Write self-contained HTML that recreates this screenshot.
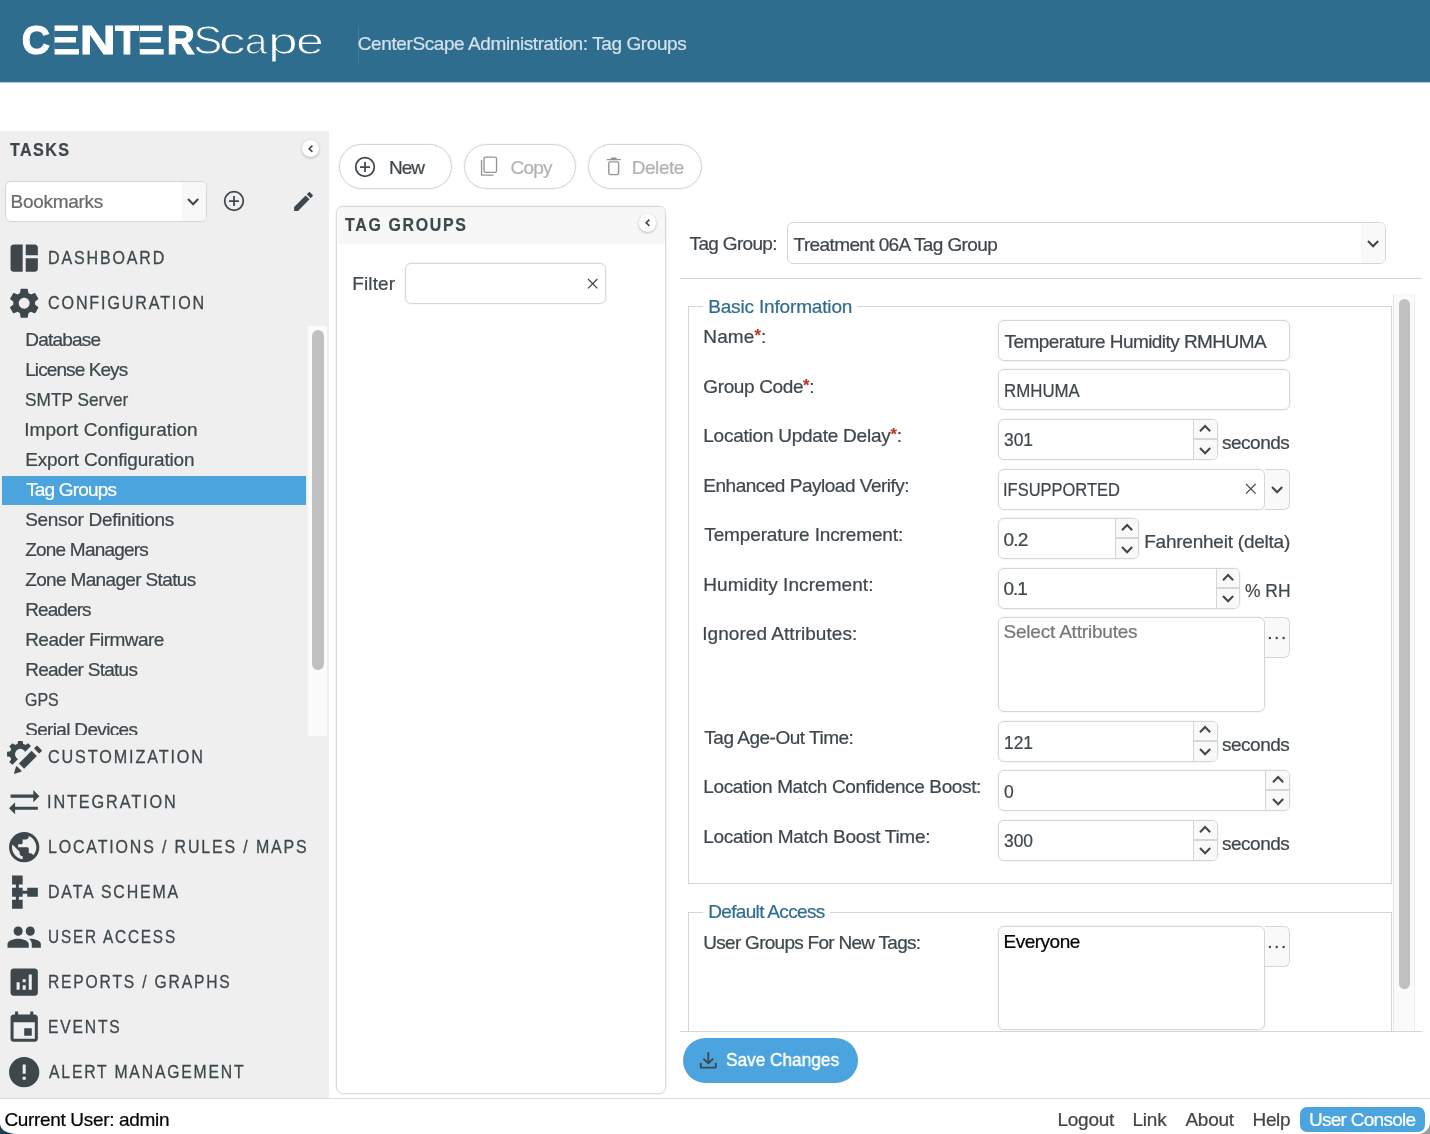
<!DOCTYPE html>
<html lang="en"><head><meta charset="utf-8"><title>CenterScape Administration: Tag Groups</title>
<style>
html,body{margin:0;padding:0;}
body{width:1430px;height:1134px;position:relative;overflow:hidden;background:#fff;font-family:"Liberation Sans", sans-serif;color:#3e474c;}
#app div,#app svg,#app span{position:absolute;box-sizing:border-box;}
#app span{white-space:nowrap;transform-origin:0 50%;-webkit-text-stroke-width:0.22px;}
</style></head>
<body><div id="app" style="left:0;top:0;width:1430px;height:1134px;overflow:hidden;will-change:transform">
<div style="left:0px;top:0px;width:1430px;height:82px;background:#2f6d8f;"></div>
<div style="left:0px;top:82px;width:1430px;height:1px;background:#b4cad6;"></div>
<div style="left:358px;top:27px;width:1px;height:36px;background:rgba(255,255,255,.10);"></div>
<svg style="left:0;top:0" width="340" height="82" viewBox="0 0 340 82" role="img" aria-label="CENTERScape"><title>CENTERScape</title>
<g font-family="Liberation Sans, sans-serif" fill="#fff">
<defs><clipPath id="ce1"><rect x="54.6" y="20" width="30" height="40"/></clipPath><clipPath id="ce2"><rect x="139.8" y="20" width="30" height="40"/></clipPath></defs>
<text transform="translate(21.69,54.3) scale(0.9838,1)" font-size="39.8" font-weight="700" stroke="#fff" stroke-width="1" vector-effect="non-scaling-stroke">C</text>
<g clip-path="url(#ce1)"><text transform="translate(41.26,54.3) scale(1.4823,1)" font-size="39.8" font-weight="700" stroke="#fff" stroke-width="1" vector-effect="non-scaling-stroke">E</text></g>
<text transform="translate(79.87,54.3) scale(1.2522,1)" font-size="39.8" font-weight="700" stroke="#fff" stroke-width="1" vector-effect="non-scaling-stroke">N</text>
<text transform="translate(115.06,54.3) scale(0.9814,1)" font-size="39.8" font-weight="700" stroke="#fff" stroke-width="1" vector-effect="non-scaling-stroke">T</text>
<g clip-path="url(#ce2)"><text transform="translate(126.71,54.3) scale(1.4521,1)" font-size="39.8" font-weight="700" stroke="#fff" stroke-width="1" vector-effect="non-scaling-stroke">E</text></g>
<text transform="translate(166.80,54.3) scale(0.9777,1)" font-size="39.8" font-weight="700" stroke="#fff" stroke-width="1" vector-effect="non-scaling-stroke">R</text>
<text transform="translate(193.27,54.3) scale(1.0955,1)" font-size="39.8" stroke="#2f6d8f" stroke-width="1.1" vector-effect="non-scaling-stroke">S</text>
<text transform="translate(218.67,54.3) scale(1.4480,1)" font-size="37" stroke="#2f6d8f" stroke-width="1.1" vector-effect="non-scaling-stroke">c</text>
<text transform="translate(244.72,54.3) scale(1.0997,1)" font-size="37" stroke="#2f6d8f" stroke-width="1.1" vector-effect="non-scaling-stroke">a</text>
<text transform="translate(268.00,54.3) scale(1.4484,1)" font-size="37" stroke="#2f6d8f" stroke-width="1.1" vector-effect="non-scaling-stroke">p</text>
<text transform="translate(295.92,54.3) scale(1.3535,1)" font-size="37" stroke="#2f6d8f" stroke-width="1.1" vector-effect="non-scaling-stroke">e</text>
</g></svg>
<div style="left:0px;top:131px;width:329px;height:967px;background:#efefef;"></div>
<div style="left:301.5px;top:139.5px;width:17.6px;height:17.6px;border-radius:50%;background:#fff;box-shadow:0 1px 3px rgba(0,0,0,.25);"></div>
<svg style="left:301.5px;top:139.5px" width="17.6" height="17.6" viewBox="0 0 17.6 17.6" fill="none" stroke="#3e474c" stroke-width="1.6"><path d="M10.4 5.7 L7.2 8.8 L10.4 11.9"/></svg>
<div style="left:5px;top:180.6px;width:201.5px;height:41px;background:#fff;border:1px solid #d6d6d6;border-radius:6px;"></div>
<div style="left:182px;top:182px;width:23.5px;height:38.6px;background:#f8f8f8;border-radius:0 5px 5px 0;"></div>
<svg style="left:222px;top:189.1px" width="24" height="24" viewBox="-12 -12 24 24" fill="none" stroke="#3e474c" stroke-width="1.75"><circle r="9.3"/><path d="M-5 0 H5 M0 -5 V5"/></svg>
<svg style="left:290.7px;top:188.5px;" width="25" height="25" viewBox="0 0 24 24" fill="#3e474c"><path d="M3 17.25V21h3.750L17.810 9.940l-3.750-3.750L3 17.250zM20.710 7.040c.390-.390.390-1.020 0-1.410l-2.340-2.340c-.390-.390-1.020-.390-1.410 0l-1.830 1.830 3.750 3.750 1.830-1.830z"/></svg>
<svg style="left:5.900000000000002px;top:240.20000000000005px;" width="36.4" height="36.4" viewBox="0 0 24 24" fill="#3e474c"><path d="M11 21H5c-1.100 0-2-.900-2-2V5c0-1.100.900-2 2-2h6v18zm2 0h6c1.100 0 2-.900 2-2v-7h-8v9zm8-11V5c0-1.100-.900-2-2-2h-6v7h8z"/></svg>
<svg style="left:5.900000000000002px;top:285.1px;" width="36.4" height="36.4" viewBox="0 0 24 24" fill="#3e474c"><path d="M19.140 12.940c.040-.300.060-.610.060-.940 0-.320-.020-.640-.070-.940l2.030-1.580c.180-.140.230-.410.120-.610l-1.920-3.320c-.120-.220-.370-.290-.590-.220l-2.390.960c-.500-.380-1.030-.700-1.620-.940l-.360-2.540c-.040-.240-.240-.410-.480-.410h-3.840c-.240 0-.430.170-.470.410l-.360 2.540c-.590.240-1.130.570-1.620.940l-2.390-.960c-.220-.080-.470 0-.590.220L2.740 8.870c-.120.210-.080.470.120.610l2.030 1.580c-.050.300-.090.630-.090.940s.020.640.070.940l-2.030 1.580c-.180.140-.230.410-.120.610l1.920 3.320c.120.220.370.290.590.220l2.390-.960c.500.380 1.030.700 1.620.940l.360 2.540c.050.240.240.410.480.410h3.840c.240 0 .440-.170.470-.410l.360-2.540c.590-.240 1.130-.560 1.620-.940l2.390.960c.220.080.470 0 .590-.220l1.920-3.320c.120-.220.070-.470-.120-.610l-2.010-1.580zM12 15.600c-1.980 0-3.600-1.620-3.600-3.600s1.620-3.600 3.600-3.600 3.600 1.620 3.600 3.600-1.620 3.600-3.600 3.600z"/></svg>
<svg style="left:5.900000000000002px;top:739.0999999999999px;" width="36.4" height="36.4" viewBox="0 0 24 24" fill="#3e474c"><defs><mask id="gm" maskUnits="userSpaceOnUse" x="-2" y="-2" width="30" height="30"><rect x="-2" y="-2" width="30" height="30" fill="#fff"/><circle cx="9.45" cy="9.98" r="3.5" fill="#000"/><g transform="translate(5.1,23.14) rotate(-45.3)"><rect x="-10" y="-4.95" width="50" height="20" fill="#000"/></g></mask></defs><g mask="url(#gm)"><circle cx="9.45" cy="9.98" r="6.95"/><g transform="translate(9.45,9.98)"><path d="M-1.95 -6 L-1.5 -8.75 H1.5 L1.95 -6 Z" transform="rotate(0)"/><path d="M-1.95 -6 L-1.5 -8.75 H1.5 L1.95 -6 Z" transform="rotate(45)"/><path d="M-1.95 -6 L-1.5 -8.75 H1.5 L1.95 -6 Z" transform="rotate(90)"/><path d="M-1.95 -6 L-1.5 -8.75 H1.5 L1.95 -6 Z" transform="rotate(135)"/><path d="M-1.95 -6 L-1.5 -8.75 H1.5 L1.95 -6 Z" transform="rotate(180)"/><path d="M-1.95 -6 L-1.5 -8.75 H1.5 L1.95 -6 Z" transform="rotate(225)"/><path d="M-1.95 -6 L-1.5 -8.75 H1.5 L1.95 -6 Z" transform="rotate(270)"/><path d="M-1.95 -6 L-1.5 -8.75 H1.5 L1.95 -6 Z" transform="rotate(315)"/></g></g><g transform="translate(5.1,23.14) rotate(-45.3)"><path d="M0.9 0 L4.7 -1.95 L4.7 1.95 Z" stroke-linejoin="round" stroke-width="0.9" stroke="#3e474c"/><rect x="7.3" y="-2.44" width="11.9" height="4.88"/><rect x="21.4" y="-2.44" width="2.85" height="4.88" rx="0.6"/></g></svg>
<svg style="left:5.900000000000002px;top:784.1999999999999px;" width="36.4" height="36.4" viewBox="0 0 24 24" fill="#3e474c"><path d="M18 12l4-4-4-4v3H3v2h15v3zM6 12l-4 4 4 4v-3h15v-2H6v-3z"/></svg>
<svg style="left:5.900000000000002px;top:828.9999999999999px;" width="36.4" height="36.4" viewBox="0 0 24 24" fill="#3e474c"><path d="M12 2C6.480 2 2 6.480 2 12s4.480 10 10 10 10-4.480 10-10S17.520 2 12 2zm-1 17.930c-3.950-.490-7-3.850-7-7.930 0-.620.080-1.210.210-1.790L9 15v1c0 1.100.900 2 2 2v1.930zm6.900-2.540c-.260-.810-1-1.390-1.900-1.390h-1v-3c0-.550-.450-1-1-1H8v-2h2c.550 0 1-.450 1-1V7h2c1.100 0 2-.900 2-2v-.410c2.930 1.190 5 4.060 5 7.410 0 2.080-.800 3.970-2.100 5.390z"/></svg>
<svg style="left:5.900000000000002px;top:873.8999999999999px;" width="36.4" height="36.4" viewBox="0 0 24 24" fill="#3e474c"><path d="M14 9v2h-3V9H8.500V7H11V1H4v6h2.500v2H4v6h2.500v2H4v6h7v-6H8.500v-2H11v-2h3v2h7V9h-7z"/></svg>
<svg style="left:5.900000000000002px;top:918.8999999999999px;" width="36.4" height="36.4" viewBox="0 0 24 24" fill="#3e474c"><path d="M16 11c1.660 0 2.990-1.340 2.990-3S17.660 5 16 5c-1.660 0-3 1.340-3 3s1.340 3 3 3zm-8 0c1.660 0 2.990-1.340 2.990-3S9.660 5 8 5C6.340 5 5 6.340 5 8s1.340 3 3 3zm0 2c-2.330 0-7 1.170-7 3.500V19h14v-2.500c0-2.330-4.670-3.500-7-3.500zm8 0c-.290 0-.620.020-.970.050 1.160.840 1.970 1.970 1.970 3.450V19h6v-2.500c0-2.330-4.670-3.500-7-3.500z"/></svg>
<svg style="left:5.900000000000002px;top:963.9999999999999px;" width="36.4" height="36.4" viewBox="0 0 24 24" fill="#3e474c"><path d="M19 3H5c-1.100 0-2 .900-2 2v14c0 1.100.900 2 2 2h14c1.100 0 2-.900 2-2V5c0-1.100-.900-2-2-2zM9 17H7v-5h2v5zm4 0h-2v-3h2v3zm0-5h-2v-2h2v2zm4 5h-2V7h2v10z"/></svg>
<svg style="left:5.900000000000002px;top:1010.3px;" width="36.4" height="36.4" viewBox="0 0 24 24" fill="#3e474c"><path d="M17 12h-5v5h5v-5zM16 1v2H8V1H6v2H5c-1.110 0-1.990.900-1.990 2L3 19c0 1.100.890 2 2 2h14c1.100 0 2-.900 2-2V5c0-1.100-.900-2-2-2h-1V1h-2zm3 18H5V8h14v11z"/></svg>
<svg style="left:5.900000000000002px;top:1054.3px;" width="36.4" height="36.4" viewBox="0 0 24 24" fill="#3e474c"><path d="M12 2C6.480 2 2 6.480 2 12s4.480 10 10 10 10-4.480 10-10S17.520 2 12 2zm1 15h-2v-2h2v2zm0-4h-2V7h2v6z"/></svg>
<div style="left:307.8px;top:325.5px;width:19px;height:410px;background:#fbfbfb;"></div>
<div style="left:312.1px;top:329.8px;width:11.8px;height:340.2px;background:#c1c1c1;border-radius:6px;"></div>
<div style="left:1.7px;top:475.6px;width:304.3px;height:29.8px;background:#4ba4de;"></div>
<div style="left:0px;top:1098px;width:1430px;height:1px;background:#dadada;"></div>
<div style="left:1300px;top:1107.2px;width:124.5px;height:24.5px;background:#4ba4de;border-radius:7px;"></div>
<svg style="left:0;top:1124px" width="17" height="10" viewBox="0 0 17 10"><path d="M0 0 C0.5 5.5 6 9.5 17 10 L0 10 Z" fill="#1c3f52"/></svg>
<svg style="left:1418px;top:1122px" width="12" height="12" viewBox="0 0 12 12"><path d="M12 0 A12 12 0 0 1 0 12 L12 12 Z" fill="#9a9a9a"/></svg>
<div style="left:339px;top:144px;width:112.6px;height:44.7px;background:#fff;border:1px solid #d4d4d4;border-radius:23px;box-shadow:0 0 0 1px rgba(0,0,0,.03);"></div>
<div style="left:463.9px;top:144px;width:112.2px;height:44.7px;background:#fff;border:1px solid #d4d4d4;border-radius:23px;box-shadow:0 0 0 1px rgba(0,0,0,.03);"></div>
<div style="left:588.2px;top:144px;width:114px;height:44.7px;background:#fff;border:1px solid #d4d4d4;border-radius:23px;box-shadow:0 0 0 1px rgba(0,0,0,.03);"></div>
<svg style="left:352.6px;top:154.7px" width="24" height="24" viewBox="-12 -12 24 24" fill="none" stroke="#3e474c" stroke-width="1.75"><circle r="9.3"/><path d="M-5 0 H5 M0 -5 V5"/></svg>
<svg style="left:478px;top:154px" width="24" height="24" viewBox="0 0 24 24" fill="none" stroke="#92969a" stroke-width="1.35"><rect x="6.05" y="3.15" width="12.5" height="15.2" rx="1.6"/><path d="M3.55 6.1 V21.15 H15.5"/></svg>
<svg style="left:602px;top:154px" width="24" height="24" viewBox="0 0 24 24" fill="none" stroke="#92969a" stroke-width="1.4"><path d="M4.7 5.6 H18.8 M9.6 5.4 V4.2 H13.9 V5.4"/><rect x="6.8" y="7.9" width="9.8" height="12.7" rx="1.3"/></svg>
<div style="left:336.4px;top:205.9px;width:329.6px;height:888.4px;background:#fff;border:1px solid #dadada;border-radius:7px;box-shadow:0 0 0 1px rgba(0,0,0,.035);"></div>
<div style="left:337.5px;top:207px;width:327.5px;height:37.3px;background:#f7f7f7;border-radius:6px 6px 0 0;"></div>
<div style="left:638.6px;top:214.39999999999998px;width:17.6px;height:17.6px;border-radius:50%;background:#fff;box-shadow:0 1px 3px rgba(0,0,0,.25);"></div>
<svg style="left:638.6px;top:214.39999999999998px" width="17.6" height="17.6" viewBox="0 0 17.6 17.6" fill="none" stroke="#3e474c" stroke-width="1.6"><path d="M10.4 5.7 L7.2 8.8 L10.4 11.9"/></svg>
<div style="left:405px;top:263px;width:201.3px;height:41.2px;background:#fff;border:1px solid #d8d8d8;border-radius:6px;box-shadow:0 0 0 1px rgba(0,0,0,.03);"></div>
<svg style="left:586.8px;top:277.90000000000003px" width="11.4" height="11.4" viewBox="-5.7 -5.7 11.4 11.4" fill="none" stroke="#3e474c" stroke-width="1.25"><path d="M-4.7 -4.7 L4.7 4.7 M4.7 -4.7 L-4.7 4.7"/></svg>
<div style="left:786.7px;top:222.4px;width:599.2px;height:41.2px;background:#fff;border:1px solid #d6d6d6;border-radius:6px;"></div>
<div style="left:1361px;top:223.4px;width:24px;height:39.2px;background:#f9f9f9;border-radius:0 5px 5px 0;"></div>
<svg style="left:1364.80px;top:237.95px" width="16.2" height="11.3" viewBox="0 0 16.2 11.3" fill="none" stroke="#3e474c" stroke-width="2.0"><path d="M3 3 L8.1 8.3 L13.2 3"/></svg>
<svg style="left:185.30px;top:195.95px" width="16.2" height="11.3" viewBox="0 0 16.2 11.3" fill="none" stroke="#3e474c" stroke-width="2.0"><path d="M3 3 L8.1 8.3 L13.2 3"/></svg>
<div style="left:680px;top:277.8px;width:742.2px;height:1.2px;background:#d6d6d6;"></div>
<div style="left:680px;top:1030.6px;width:742.2px;height:1.2px;background:#d6d6d6;"></div>
<div style="left:1392.6px;top:294px;width:22px;height:736.6px;background:#fafafa;border-left:1px solid #e6e6e6;border-right:1px solid #ececec;"></div>
<div style="left:1398.5px;top:298.6px;width:11.7px;height:690.2px;background:#c1c1c1;border-radius:6px;"></div>
<div style="left:687.5px;top:306.2px;width:704.8px;height:577.8px;border:1px solid #d6d6d6;"></div>
<div style="left:703px;top:300px;width:154.2px;height:12px;background:#fff;"></div>
<div style="left:687.5px;top:912px;width:704.8px;height:119px;border:1px solid #d6d6d6;border-bottom:none;"></div>
<div style="left:703px;top:906px;width:127px;height:12px;background:#fff;"></div>
<div style="left:998.3px;top:319.9px;width:291.7px;height:41px;background:#fff;border:1px solid #d6d6d6;border-radius:6px;box-shadow:0 0 0 1px rgba(0,0,0,.03);"></div>
<div style="left:998.3px;top:369.45px;width:291.7px;height:41px;background:#fff;border:1px solid #d6d6d6;border-radius:6px;box-shadow:0 0 0 1px rgba(0,0,0,.03);"></div>
<div style="left:998.3px;top:419.0px;width:219.29999999999995px;height:41px;background:#fff;border:1px solid #d6d6d6;border-radius:6px;box-shadow:0 0 0 1px rgba(0,0,0,.03);"></div>
<div style="left:1193.0px;top:420.0px;width:23.6px;height:39px;background:#f9f9f9;border-left:1px solid #d6d6d6;border-radius:0 5px 5px 0;"></div>
<div style="left:1193.0px;top:438.3px;width:23.6px;height:1.8px;background:#d6d6d6;"></div>
<svg style="left:1197.20px;top:422.95px" width="16.2" height="11.3" viewBox="0 0 16.2 11.3" fill="none" stroke="#3e474c" stroke-width="2.0"><path d="M3 8.3 L8.1 3 L13.2 8.3"/></svg>
<svg style="left:1197.20px;top:444.65px" width="16.2" height="11.3" viewBox="0 0 16.2 11.3" fill="none" stroke="#3e474c" stroke-width="2.0"><path d="M3 3 L8.1 8.3 L13.2 3"/></svg>
<div style="left:998.3px;top:468.54999999999995px;width:266.3px;height:41px;background:#fff;border:1px solid #d6d6d6;border-radius:6px;box-shadow:0 0 0 1px rgba(0,0,0,.03);"></div>
<div style="left:1264.6px;top:468.54999999999995px;width:25.4px;height:41px;background:#f9f9f9;border:1px solid #d6d6d6;border-left:none;border-radius:0 6px 6px 0;"></div>
<svg style="left:1245.4px;top:483.1499999999999px" width="11.6" height="11.6" viewBox="-5.8 -5.8 11.6 11.6" fill="none" stroke="#3e474c" stroke-width="1.2"><path d="M-4.8 -4.8 L4.8 4.8 M4.8 -4.8 L-4.8 4.8"/></svg>
<svg style="left:1268.70px;top:483.50px" width="16.2" height="11.3" viewBox="0 0 16.2 11.3" fill="none" stroke="#3e474c" stroke-width="2.0"><path d="M3 3 L8.1 8.3 L13.2 3"/></svg>
<div style="left:998.3px;top:518.0999999999999px;width:141.20000000000005px;height:41px;background:#fff;border:1px solid #d6d6d6;border-radius:6px;box-shadow:0 0 0 1px rgba(0,0,0,.03);"></div>
<div style="left:1114.9px;top:519.0999999999999px;width:23.6px;height:39px;background:#f9f9f9;border-left:1px solid #d6d6d6;border-radius:0 5px 5px 0;"></div>
<div style="left:1114.9px;top:537.3999999999999px;width:23.6px;height:1.8px;background:#d6d6d6;"></div>
<svg style="left:1119.10px;top:522.05px" width="16.2" height="11.3" viewBox="0 0 16.2 11.3" fill="none" stroke="#3e474c" stroke-width="2.0"><path d="M3 8.3 L8.1 3 L13.2 8.3"/></svg>
<svg style="left:1119.10px;top:543.75px" width="16.2" height="11.3" viewBox="0 0 16.2 11.3" fill="none" stroke="#3e474c" stroke-width="2.0"><path d="M3 3 L8.1 8.3 L13.2 3"/></svg>
<div style="left:998.3px;top:567.65px;width:241.9000000000001px;height:41px;background:#fff;border:1px solid #d6d6d6;border-radius:6px;box-shadow:0 0 0 1px rgba(0,0,0,.03);"></div>
<div style="left:1215.6000000000001px;top:568.65px;width:23.6px;height:39px;background:#f9f9f9;border-left:1px solid #d6d6d6;border-radius:0 5px 5px 0;"></div>
<div style="left:1215.6000000000001px;top:586.9499999999999px;width:23.6px;height:1.8px;background:#d6d6d6;"></div>
<svg style="left:1219.80px;top:571.60px" width="16.2" height="11.3" viewBox="0 0 16.2 11.3" fill="none" stroke="#3e474c" stroke-width="2.0"><path d="M3 8.3 L8.1 3 L13.2 8.3"/></svg>
<svg style="left:1219.80px;top:593.30px" width="16.2" height="11.3" viewBox="0 0 16.2 11.3" fill="none" stroke="#3e474c" stroke-width="2.0"><path d="M3 3 L8.1 8.3 L13.2 3"/></svg>
<div style="left:998.3px;top:617.1999999999999px;width:266.5px;height:95px;background:#fff;border:1px solid #d6d6d6;border-radius:6px;box-shadow:0 0 0 1px rgba(0,0,0,.03);"></div>
<div style="left:1264.6px;top:617.1999999999999px;width:25.4px;height:40.5px;background:#f9f9f9;border:1px solid #d6d6d6;border-left:none;border-radius:0 6px 6px 0;"></div>
<svg style="left:1266px;top:633.80px" width="22" height="8" viewBox="0 0 22 8" fill="#3e474c"><circle cx="3.9" cy="4" r="1.2"/><circle cx="10.7" cy="4" r="1.2"/><circle cx="17.6" cy="4" r="1.2"/></svg>
<div style="left:998.3px;top:720.5px;width:219.29999999999995px;height:41px;background:#fff;border:1px solid #d6d6d6;border-radius:6px;box-shadow:0 0 0 1px rgba(0,0,0,.03);"></div>
<div style="left:1193.0px;top:721.5px;width:23.6px;height:39px;background:#f9f9f9;border-left:1px solid #d6d6d6;border-radius:0 5px 5px 0;"></div>
<div style="left:1193.0px;top:739.8px;width:23.6px;height:1.8px;background:#d6d6d6;"></div>
<svg style="left:1197.20px;top:724.45px" width="16.2" height="11.3" viewBox="0 0 16.2 11.3" fill="none" stroke="#3e474c" stroke-width="2.0"><path d="M3 8.3 L8.1 3 L13.2 8.3"/></svg>
<svg style="left:1197.20px;top:746.15px" width="16.2" height="11.3" viewBox="0 0 16.2 11.3" fill="none" stroke="#3e474c" stroke-width="2.0"><path d="M3 3 L8.1 8.3 L13.2 3"/></svg>
<div style="left:998.3px;top:770.0px;width:291.70000000000005px;height:41px;background:#fff;border:1px solid #d6d6d6;border-radius:6px;box-shadow:0 0 0 1px rgba(0,0,0,.03);"></div>
<div style="left:1265.4px;top:771.0px;width:23.6px;height:39px;background:#f9f9f9;border-left:1px solid #d6d6d6;border-radius:0 5px 5px 0;"></div>
<div style="left:1265.4px;top:789.3px;width:23.6px;height:1.8px;background:#d6d6d6;"></div>
<svg style="left:1269.60px;top:773.95px" width="16.2" height="11.3" viewBox="0 0 16.2 11.3" fill="none" stroke="#3e474c" stroke-width="2.0"><path d="M3 8.3 L8.1 3 L13.2 8.3"/></svg>
<svg style="left:1269.60px;top:795.65px" width="16.2" height="11.3" viewBox="0 0 16.2 11.3" fill="none" stroke="#3e474c" stroke-width="2.0"><path d="M3 3 L8.1 8.3 L13.2 3"/></svg>
<div style="left:998.3px;top:819.55px;width:219.29999999999995px;height:41px;background:#fff;border:1px solid #d6d6d6;border-radius:6px;box-shadow:0 0 0 1px rgba(0,0,0,.03);"></div>
<div style="left:1193.0px;top:820.55px;width:23.6px;height:39px;background:#f9f9f9;border-left:1px solid #d6d6d6;border-radius:0 5px 5px 0;"></div>
<div style="left:1193.0px;top:838.8499999999999px;width:23.6px;height:1.8px;background:#d6d6d6;"></div>
<svg style="left:1197.20px;top:823.50px" width="16.2" height="11.3" viewBox="0 0 16.2 11.3" fill="none" stroke="#3e474c" stroke-width="2.0"><path d="M3 8.3 L8.1 3 L13.2 8.3"/></svg>
<svg style="left:1197.20px;top:845.20px" width="16.2" height="11.3" viewBox="0 0 16.2 11.3" fill="none" stroke="#3e474c" stroke-width="2.0"><path d="M3 3 L8.1 8.3 L13.2 3"/></svg>
<div style="left:998.3px;top:926px;width:266.5px;height:103.6px;background:#fff;border:1px solid #d6d6d6;border-radius:6px;box-shadow:0 0 0 1px rgba(0,0,0,.03);"></div>
<div style="left:1264.6px;top:926px;width:25.4px;height:40.5px;background:#f9f9f9;border:1px solid #d6d6d6;border-left:none;border-radius:0 6px 6px 0;"></div>
<svg style="left:1266px;top:942.60px" width="22" height="8" viewBox="0 0 22 8" fill="#3e474c"><circle cx="3.9" cy="4" r="1.2"/><circle cx="10.7" cy="4" r="1.2"/><circle cx="17.6" cy="4" r="1.2"/></svg>
<div style="left:682.7px;top:1038px;width:175.4px;height:44.6px;background:#4ba4de;border-radius:23px;"></div>
<svg style="left:699px;top:1051px" width="19" height="19" viewBox="0 0 19 19" fill="none" stroke="#3d4a52" stroke-width="1.9" stroke-linecap="round" stroke-linejoin="round"><path d="M9.3 2 V12.2 M5 8.2 L9.3 12.4 L13.6 8.2 M1.8 12.6 V16.6 H16.8 V12.6"/></svg>
<span style="left:357.80px;top:34px;font-size:19px;line-height:19px;color:#d3e1ea;letter-spacing:-0.405px;">CenterScape Administration: Tag Groups</span>
<span style="left:9.80px;top:140px;font-size:19px;line-height:19px;font-weight:700;letter-spacing:1.600px;transform:scaleX(0.8507);">TASKS</span>
<span style="left:10.50px;top:192px;font-size:19px;line-height:19px;color:#6a6a6a;letter-spacing:-0.275px;">Bookmarks</span>
<span style="left:48.06px;top:248px;font-size:19px;line-height:19px;letter-spacing:2.200px;transform:scaleX(0.8426);-webkit-text-stroke:0.3px #3e474c;">DASHBOARD</span>
<span style="left:48.05px;top:293px;font-size:19px;line-height:19px;letter-spacing:2.200px;transform:scaleX(0.8473);-webkit-text-stroke:0.3px #3e474c;">CONFIGURATION</span>
<span style="left:48.05px;top:747px;font-size:19px;line-height:19px;letter-spacing:2.200px;transform:scaleX(0.8517);-webkit-text-stroke:0.3px #3e474c;">CUSTOMIZATION</span>
<span style="left:47.19px;top:792px;font-size:19px;line-height:19px;letter-spacing:2.200px;transform:scaleX(0.8558);-webkit-text-stroke:0.3px #3e474c;">INTEGRATION</span>
<span style="left:48.06px;top:837px;font-size:19px;line-height:19px;letter-spacing:2.200px;transform:scaleX(0.8402);-webkit-text-stroke:0.3px #3e474c;">LOCATIONS / RULES / MAPS</span>
<span style="left:48.06px;top:882px;font-size:19px;line-height:19px;letter-spacing:2.200px;transform:scaleX(0.8383);-webkit-text-stroke:0.3px #3e474c;">DATA SCHEMA</span>
<span style="left:48.09px;top:927px;font-size:19px;line-height:19px;letter-spacing:2.200px;transform:scaleX(0.8090);-webkit-text-stroke:0.3px #3e474c;">USER ACCESS</span>
<span style="left:48.08px;top:972px;font-size:19px;line-height:19px;letter-spacing:2.200px;transform:scaleX(0.8237);-webkit-text-stroke:0.3px #3e474c;">REPORTS / GRAPHS</span>
<span style="left:48.08px;top:1017px;font-size:19px;line-height:19px;letter-spacing:2.200px;transform:scaleX(0.8247);-webkit-text-stroke:0.3px #3e474c;">EVENTS</span>
<span style="left:48.90px;top:1062px;font-size:19px;line-height:19px;letter-spacing:2.200px;transform:scaleX(0.8281);-webkit-text-stroke:0.3px #3e474c;">ALERT MANAGEMENT</span>
<span style="left:25.20px;top:330px;font-size:19px;line-height:19px;letter-spacing:-0.771px;">Database</span>
<span style="left:25.20px;top:360px;font-size:19px;line-height:19px;letter-spacing:-0.909px;">License Keys</span>
<span style="left:25.29px;top:390px;font-size:19px;line-height:19px;transform:scaleX(0.9089);">SMTP Server</span>
<span style="left:24.20px;top:420px;font-size:19px;line-height:19px;letter-spacing:0.068px;">Import Configuration</span>
<span style="left:25.20px;top:450px;font-size:19px;line-height:19px;letter-spacing:-0.205px;">Export Configuration</span>
<span style="left:26.20px;top:480px;font-size:19px;line-height:19px;color:#fff;letter-spacing:-0.833px;">Tag Groups</span>
<span style="left:25.20px;top:510px;font-size:19px;line-height:19px;letter-spacing:-0.306px;">Sensor Definitions</span>
<span style="left:25.20px;top:540px;font-size:19px;line-height:19px;letter-spacing:-0.783px;">Zone Managers</span>
<span style="left:25.20px;top:570px;font-size:19px;line-height:19px;letter-spacing:-0.650px;">Zone Manager Status</span>
<span style="left:25.20px;top:600px;font-size:19px;line-height:19px;letter-spacing:-0.900px;">Readers</span>
<span style="left:25.20px;top:630px;font-size:19px;line-height:19px;letter-spacing:-0.550px;">Reader Firmware</span>
<span style="left:25.20px;top:660px;font-size:19px;line-height:19px;letter-spacing:-0.725px;">Reader Status</span>
<span style="left:25.36px;top:690px;font-size:19px;line-height:19px;transform:scaleX(0.8421);">GPS</span>
<span style="left:25.20px;top:720px;font-size:19px;line-height:19px;letter-spacing:-0.669px;">Serial Devices</span>
<span style="left:4.40px;top:1110px;font-size:19px;line-height:19px;color:#000;letter-spacing:-0.333px;">Current User: admin</span>
<span style="left:1057.50px;top:1110px;font-size:19px;line-height:19px;color:#444;letter-spacing:-0.260px;">Logout</span>
<span style="left:1132.50px;top:1110px;font-size:19px;line-height:19px;color:#444;letter-spacing:-0.233px;">Link</span>
<span style="left:1185.40px;top:1110px;font-size:19px;line-height:19px;color:#444;letter-spacing:-0.250px;">About</span>
<span style="left:1252.50px;top:1110px;font-size:19px;line-height:19px;color:#444;letter-spacing:-0.333px;">Help</span>
<span style="left:1309.00px;top:1110px;font-size:19px;line-height:19px;color:#fff;letter-spacing:-0.727px;">User Console</span>
<span style="left:389.00px;top:158px;font-size:19px;line-height:19px;letter-spacing:-1.000px;">New</span>
<span style="left:510.60px;top:158px;font-size:19px;line-height:19px;color:#b2b2b2;letter-spacing:-0.800px;">Copy</span>
<span style="left:631.70px;top:158px;font-size:19px;line-height:19px;color:#b2b2b2;letter-spacing:-0.440px;">Delete</span>
<span style="left:344.70px;top:215px;font-size:19px;line-height:19px;font-weight:700;letter-spacing:2.000px;transform:scaleX(0.8375);">TAG GROUPS</span>
<span style="left:352.30px;top:274px;font-size:19px;line-height:19px;letter-spacing:0.120px;">Filter</span>
<span style="left:689.60px;top:234px;font-size:19px;line-height:19px;letter-spacing:-0.678px;">Tag Group:</span>
<span style="left:793.60px;top:235px;font-size:19px;line-height:19px;letter-spacing:-0.609px;">Treatment 06A Tag Group</span>
<span style="left:708.20px;top:297px;font-size:19px;line-height:19px;color:#2f6d8f;letter-spacing:-0.163px;">Basic Information</span>
<span style="left:708.20px;top:902px;font-size:19px;line-height:19px;color:#2f6d8f;letter-spacing:-0.662px;">Default Access</span>
<span style="left:703.30px;top:327px;font-size:19px;line-height:19px;letter-spacing:0.140px;">Name<b style="color:#b83a2b;font-size:16.5px;line-height:0;position:relative;top:-1.7px">*</b>:</span>
<span style="left:703.30px;top:377px;font-size:19px;line-height:19px;letter-spacing:-0.373px;">Group Code<b style="color:#b83a2b;font-size:16.5px;line-height:0;position:relative;top:-1.7px">*</b>:</span>
<span style="left:703.30px;top:426px;font-size:19px;line-height:19px;letter-spacing:-0.241px;">Location Update Delay<b style="color:#b83a2b;font-size:16.5px;line-height:0;position:relative;top:-1.7px">*</b>:</span>
<span style="left:703.30px;top:476px;font-size:19px;line-height:19px;letter-spacing:-0.491px;">Enhanced Payload Verify:</span>
<span style="left:704.30px;top:525px;font-size:19px;line-height:19px;letter-spacing:-0.133px;">Temperature Increment:</span>
<span style="left:703.30px;top:575px;font-size:19px;line-height:19px;letter-spacing:0.067px;">Humidity Increment:</span>
<span style="left:702.30px;top:624px;font-size:19px;line-height:19px;letter-spacing:0.039px;">Ignored Attributes:</span>
<span style="left:704.30px;top:728px;font-size:19px;line-height:19px;letter-spacing:-0.487px;">Tag Age-Out Time:</span>
<span style="left:703.30px;top:777px;font-size:19px;line-height:19px;letter-spacing:-0.365px;">Location Match Confidence Boost:</span>
<span style="left:703.30px;top:827px;font-size:19px;line-height:19px;letter-spacing:-0.292px;">Location Match Boost Time:</span>
<span style="left:1004.50px;top:332px;font-size:19px;line-height:19px;letter-spacing:-0.558px;">Temperature Humidity RMHUMA</span>
<span style="left:1003.61px;top:381px;font-size:19px;line-height:19px;transform:scaleX(0.8869);">RMHUMA</span>
<span style="left:1003.58px;top:430px;font-size:19px;line-height:19px;transform:scaleX(0.9167);">301</span>
<span style="left:1222.00px;top:433px;font-size:19px;line-height:19px;letter-spacing:-0.500px;">seconds</span>
<span style="left:1002.77px;top:480px;font-size:19px;line-height:19px;transform:scaleX(0.8674);">IFSUPPORTED</span>
<span style="left:1003.50px;top:530px;font-size:19px;line-height:19px;letter-spacing:-0.850px;">0.2</span>
<span style="left:1144.20px;top:532px;font-size:19px;line-height:19px;letter-spacing:-0.229px;">Fahrenheit (delta)</span>
<span style="left:1003.50px;top:579px;font-size:19px;line-height:19px;letter-spacing:-1.000px;">0.1</span>
<span style="left:1244.98px;top:581px;font-size:19px;line-height:19px;transform:scaleX(0.9170);">% RH</span>
<span style="left:1003.50px;top:622px;font-size:19px;line-height:19px;color:#777;letter-spacing:-0.200px;">Select Attributes</span>
<span style="left:1003.58px;top:733px;font-size:19px;line-height:19px;transform:scaleX(0.9167);">121</span>
<span style="left:1222.00px;top:735px;font-size:19px;line-height:19px;letter-spacing:-0.500px;">seconds</span>
<span style="left:1003.58px;top:782px;font-size:19px;line-height:19px;transform:scaleX(0.9222);">0</span>
<span style="left:1003.58px;top:831px;font-size:19px;line-height:19px;transform:scaleX(0.9167);">300</span>
<span style="left:1222.00px;top:834px;font-size:19px;line-height:19px;letter-spacing:-0.500px;">seconds</span>
<span style="left:703.30px;top:933px;font-size:19px;line-height:19px;letter-spacing:-0.721px;">User Groups For New Tags:</span>
<span style="left:1003.50px;top:932px;font-size:19px;line-height:19px;color:#000;letter-spacing:-0.500px;">Everyone</span>
<span style="left:725.89px;top:1050px;font-size:19px;line-height:19px;color:#fff;transform:scaleX(0.9073);-webkit-text-stroke:0.45px #fff;">Save Changes</span>
<div style="left:0;top:735.4px;width:308px;height:5.6px;background:#efefef"></div>
</div></body></html>
